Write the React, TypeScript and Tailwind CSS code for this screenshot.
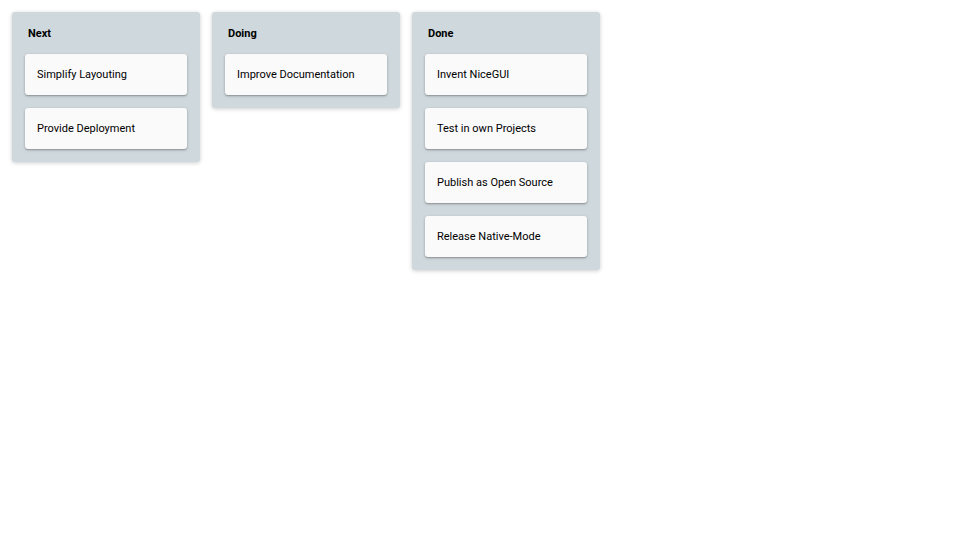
const columns = [
  { name: 'Next', items: ['Simplify Layouting', 'Provide Deployment'] },
  { name: 'Doing', items: ['Improve Documentation'] },
  {
    name: 'Done',
    items: ['Invent NiceGUI', 'Test in own Projects', 'Publish as Open Source', 'Release Native-Mode'],
  },
]

function Card({ text }: { text: string }) {
  return (
    <div className="h-[41px] flex items-center px-[12px] pt-[2px] bg-[#fafafa] rounded-[3px] shadow-[0_1px_3px_rgba(0,0,0,0.25),0_1px_1px_rgba(0,0,0,0.14)] text-[11px] text-black">
      {text}
    </div>
  )
}

function Column({ name, items }: { name: string; items: string[] }) {
  return (
    <div className="w-[188px] bg-[#cfd8dc] rounded-[3px] px-[13px] pt-[15px] pb-[13px] shadow-[0_1px_4px_rgba(0,0,0,0.2)]">
      <div className="text-[11px] font-bold text-black leading-[14px] pl-[3px] mb-[13px]">{name}</div>
      <div className="flex flex-col gap-[13px]">
        {items.map((it) => (
          <Card key={it} text={it} />
        ))}
      </div>
    </div>
  )
}

export default function App() {
  return (
    <div className="w-[960px] h-[540px] bg-white p-[12px] flex items-start gap-[12px] font-['Roboto',sans-serif]">
      {columns.map((c) => (
        <Column key={c.name} name={c.name} items={c.items} />
      ))}
    </div>
  )
}
